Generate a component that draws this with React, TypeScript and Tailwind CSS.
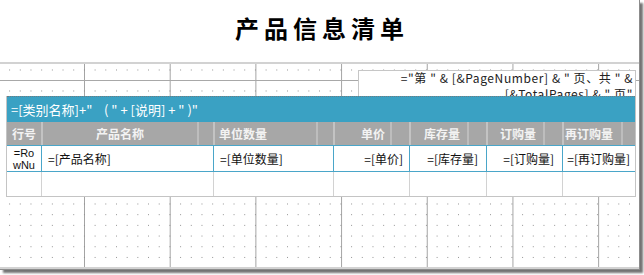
const cols = "grid grid-cols-[34px_172px_120px_76px_77px_76px_73px]";

function HeaderCell({ label, sub, align }: { label: string; sub: string; align: string }) {
  return (
    <div className="flex border-l-2 border-[#c3c3c3]">
      <div className={`flex flex-1 items-center ${align}`}>{label}</div>
      <div className={`${sub} border-l-2 border-[#bdbdbd]`} />
    </div>
  );
}

export default function App() {
  return (
    <div className="h-[275px] w-[644px] bg-white font-['Noto_Sans_CJK_SC',sans-serif] text-black">
      <div className="h-[270px] w-[640px] border-r border-b border-[#8c8c8c] shadow-[3px_3px_2px_rgba(0,0,0,0.55)]">
        {/* report title */}
        <div className="h-[62px] pt-[12px] pl-[5px] text-center text-[24px] leading-[32px] font-bold tracking-[5px]">
          产品信息清单
        </div>

        {/* design surface */}
        <div className="border-y-2 border-[#d2d2d2] [background-image:linear-gradient(to_right,#a4a4a4_1px,transparent_1px)] [background-size:85.7px_100%] [background-position:84px_0]">
          <div className="relative">
            <div className="h-[17px] border-b border-[#a8a8a8] bg-[radial-gradient(circle,#8f8f8f_0.75px,transparent_0.95px)] [background-size:10.7px_10.7px] [background-position:4.25px_0.65px]" />
            <div className="h-[15px] bg-[radial-gradient(circle,#8f8f8f_0.75px,transparent_0.95px)] [background-size:10.7px_10.7px] [background-position:4.25px_4.65px]" />
            <div className="absolute top-[6px] left-[358px] h-[27px] w-[278px] overflow-hidden border border-[#c6c6c6] bg-white pr-[2px] text-right text-[12px] leading-[16px] tracking-[0.6px] whitespace-pre text-[#222]">
              <div className="-mt-[1px]">
                {'="第 " & [&PageNumber] & " 页、共 " &'}
                <br />
                {'[&TotalPages] & " 页"'}
              </div>
            </div>
          </div>

          {/* table */}
          <div className="relative z-10 ml-[6px] w-[630px] border-x border-b border-[#c4c4c4] bg-white">
            <div className="flex h-[26px] items-center border-t border-dotted border-[#6e7c82] bg-[#3aa1c3] pl-[4px] text-[13px] whitespace-pre text-white">
              {'=[类别名称]+"    ( " + [说明] + " )"'}
            </div>

            <div className={`${cols} h-[23px] bg-[#a7a7a7] text-[12px] font-bold text-[#f3f3f3]`}>
              <div className="flex items-center justify-center">行号</div>
              <HeaderCell label="产品名称" sub="w-[16px]" align="justify-center" />
              <HeaderCell label="单位数量" sub="w-[17px]" align="justify-start pl-[4px]" />
              <HeaderCell label="单价" sub="w-[19px]" align="justify-end pr-[5px]" />
              <HeaderCell label="库存量" sub="w-[19px]" align="justify-end pr-[7px]" />
              <HeaderCell label="订购量" sub="w-[19px]" align="justify-end pr-[7px]" />
              <HeaderCell label="再订购量" sub="w-[14px]" align="justify-end pr-[8px]" />
            </div>

            <div className={`${cols} h-[27px] border-y border-[#4aa6c9] text-[12px] text-[#111]`}>
              <div className="overflow-hidden px-[4px] pt-[1px] text-center font-['Liberation_Sans',sans-serif] text-[11px] leading-[12px] break-all">
                =RowNumber
              </div>
              <div className="flex items-center border-l border-[#4aa6c9] pl-[6px]">=[产品名称]</div>
              <div className="flex items-center border-l border-[#4aa6c9] pl-[6px]">=[单位数量]</div>
              <div className="flex items-center justify-end border-l border-[#4aa6c9] pr-[6px]">=[单价]</div>
              <div className="flex items-center justify-end border-l border-[#4aa6c9] pr-[8px]">=[库存量]</div>
              <div className="flex items-center justify-end border-l border-[#4aa6c9] pr-[8px]">=[订购量]</div>
              <div className="flex items-center justify-end border-l border-[#4aa6c9] pr-[5px]">=[再订购量]</div>
            </div>

            <div className={`${cols} h-[24px]`}>
              <div />
              <div className="border-l border-[#d2d2d2]" />
              <div className="border-l border-[#d2d2d2]" />
              <div className="border-l border-[#d2d2d2]" />
              <div className="border-l border-[#d2d2d2]" />
              <div className="border-l border-[#d2d2d2]" />
              <div className="border-l border-[#d2d2d2]" />
            </div>
          </div>

          <div className="h-[70px] bg-[radial-gradient(circle,#8f8f8f_0.75px,transparent_0.95px)] [background-size:10.7px_10.7px] [background-position:4.25px_1.65px]" />
        </div>
      </div>
    </div>
  );
}
